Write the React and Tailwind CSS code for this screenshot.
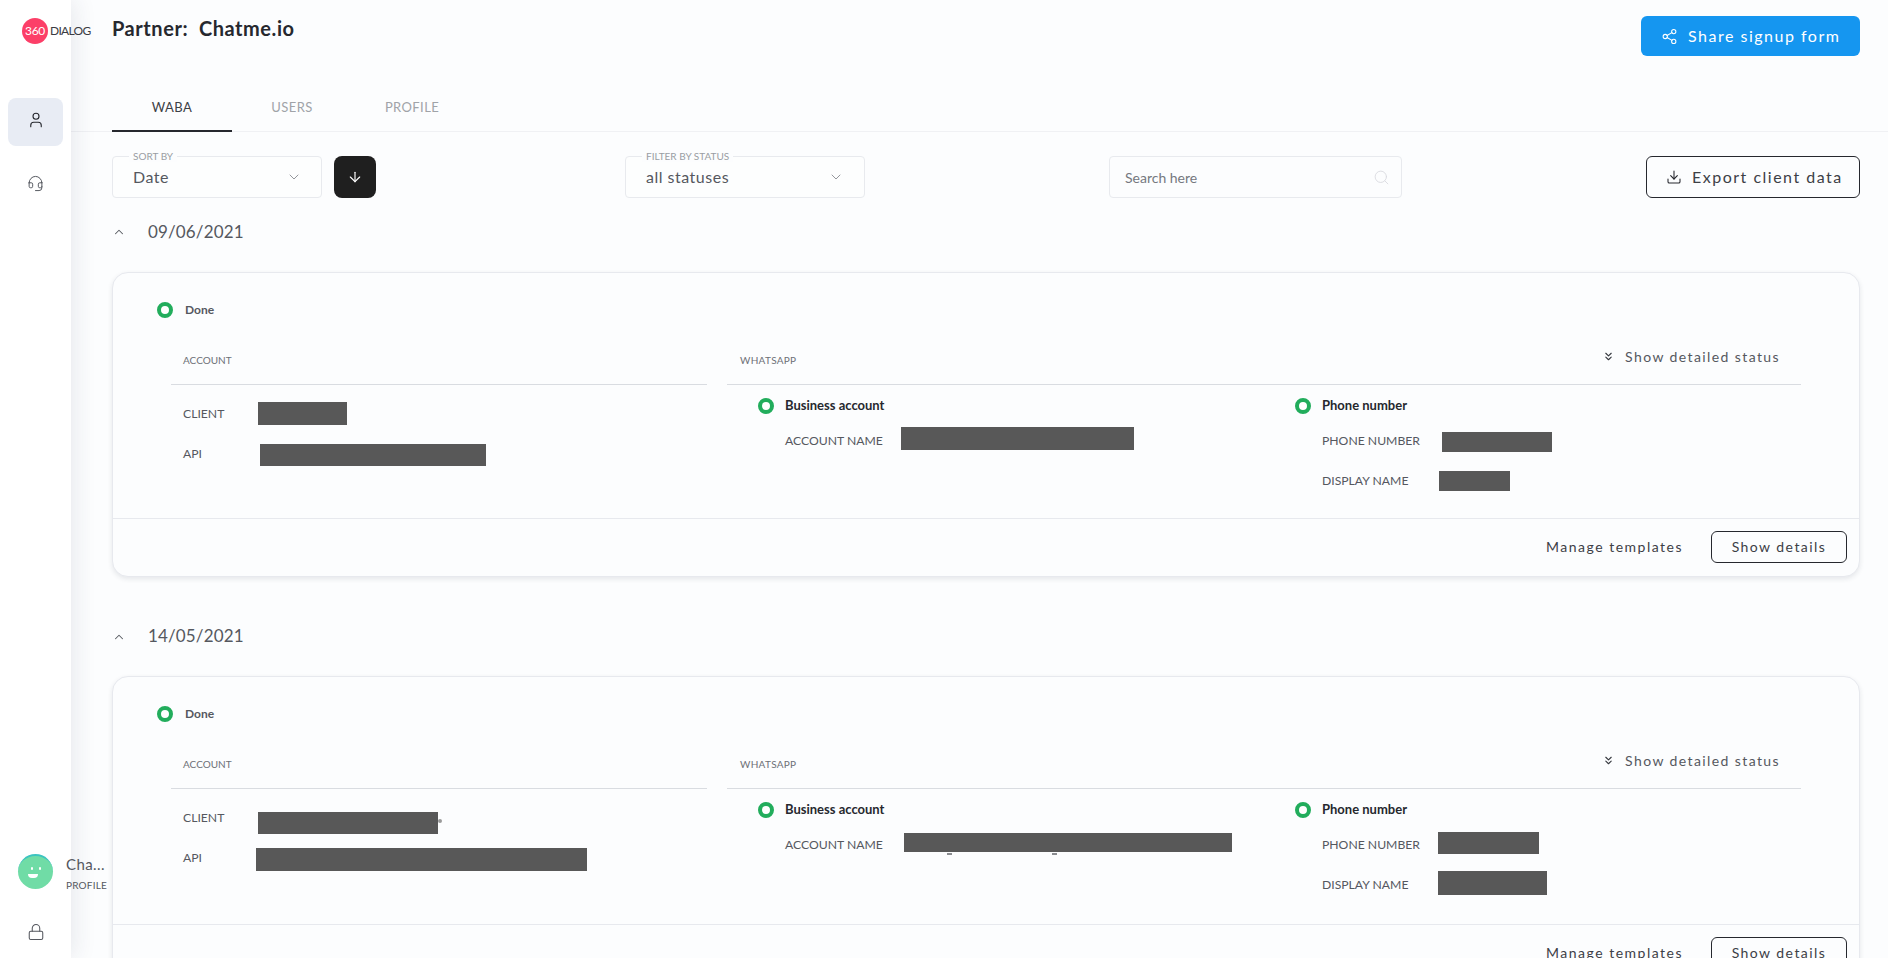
import React from "react";
import { User, Headset, Lock, ChevronDown, ChevronUp, ArrowDown, Share2, Download, Search, ChevronsDown } from "lucide-react";

function Redact({ className = "" }) {
  return <div className={"bg-[#585858] shrink-0 " + className} />;
}
function Dot() {
  return <span className="w-4 h-4 rounded-full border-[4px] border-[#22ad5c] bg-white shrink-0" />;
}
function Field({ label, labelW, children }) {
  return (
    <div className="flex items-center h-10 relative">
      <span className={"text-[12.2px] mt-[1px] text-[#55585f] shrink-0 " + labelW}>{label}</span>
      {children}
    </div>
  );
}
function SelectBox({ label, value, w, chev }) {
  return (
    <div className={"relative h-[42px] border border-[#e8eaee] rounded bg-white/40 flex items-center pl-[20px] " + w}>
      <span className="absolute left-[16px] -top-[7px] px-1 bg-[#fcfdfe] text-[10px] leading-3 text-[#9a9da3] whitespace-nowrap">{label}</span>
      <span className="text-[16px] tracking-[0.5px] text-[#55585f]">{value}</span>
      <ChevronDown className={"absolute top-[12px] text-[#7f8288] " + chev} size={16} strokeWidth={1.25} />
    </div>
  );
}
function Card({ r, bodyH }) {
  return (
    <div className="mt-7 w-[1748px] rounded-2xl border border-[#e7e9ee] shadow-[0_2px_5px_rgba(30,40,60,0.10)] bg-[#fcfdfe]">
      <div className={"pl-[44px] pt-[27px] " + bodyH}>
        <div className="flex items-center h-5">
          <Dot />
          <span className="ml-3 text-[12px] font-bold text-[#55585f]">Done</span>
        </div>
        <div className="flex ml-[14px] mt-5">
          <div className="w-[536px] shrink-0">
            <div className="h-[45px] border-b border-[#d9dce1] flex items-center pl-3 pb-[3px] text-[10px] text-[#6d7076]">ACCOUNT</div>
            <div className="pl-3 pt-[9px]">
              {r.client}
              {r.api}
            </div>
          </div>
          <div className="w-[1074px] ml-[20px] shrink-0">
            <div className="h-[45px] border-b border-[#d9dce1] flex items-center justify-between pl-[13px] pr-[21px] pb-[3px]">
              <span className="text-[10px] tracking-[0.3px] text-[#6d7076]">WHATSAPP</span>
              <span className="flex items-center text-[14px] tracking-[1.4px] text-[#55585f] -mt-[8px]">
                <ChevronsDown size={13} strokeWidth={2} className="mr-[10px] text-[#33363c]" />
                Show detailed status
              </span>
            </div>
            <div className="flex pl-[31px] pt-[11px]">
              <div className="w-[537px] shrink-0">
                <div className="flex items-center h-5">
                  <Dot />
                  <span className="ml-[11px] text-[13px] font-bold text-[#26282e]">Business account</span>
                </div>
                <div className="pl-[27px] pt-[5px]">{r.account}</div>
              </div>
              <div className="shrink-0">
                <div className="flex items-center h-5">
                  <Dot />
                  <span className="ml-[11px] text-[13px] font-bold text-[#26282e]">Phone number</span>
                </div>
                <div className="pl-[27px] pt-[5px]">
                  {r.phone}
                  {r.display}
                </div>
              </div>
            </div>
          </div>
        </div>
      </div>
      <div className="h-[58px] border-t border-[#e7e9ee] flex items-center justify-end pr-3 pb-[2px]">
        <span className="text-[14px] tracking-[1.5px] text-[#3d4046] mr-7">Manage templates</span>
        <button className="w-[136px] h-8 rounded-md border border-[#26282e] text-[14px] tracking-[1.45px] text-[#3d4046]">Show details</button>
      </div>
    </div>
  );
}
function DateRow({ date, first }) {
  return (
    <div className={"flex items-center h-6 " + (first ? "mt-[22px]" : "mt-[47px]")}>
      <ChevronUp size={14} strokeWidth={1.75} className={"text-[#55585f] " + (first ? "" : "mt-[1px]")} />
      <span className={"ml-[22px] text-[17px] tracking-[0.15px] text-[#55585f] " + (first ? "-mt-[1px]" : "mt-0")}>{date}</span>
    </div>
  );
}

const card1 = {
  client: <Field label="CLIENT" labelW="w-[75px]"><Redact className="w-[89px] h-[23px] -mt-[2px]" /></Field>,
  api: <Field label="API" labelW="w-[77px]"><Redact className="w-[226px] h-[22px] mt-[1px]" /></Field>,
  account: <Field label="ACCOUNT NAME" labelW="w-[116px]"><Redact className="w-[233px] h-[23px] -mt-[6px]" /></Field>,
  phone: <Field label="PHONE NUMBER" labelW="w-[120px]"><Redact className="w-[110px] h-5 mt-[2px]" /></Field>,
  display: <Field label="DISPLAY NAME" labelW="w-[117px]"><Redact className="w-[71px] h-5" /></Field>,
};
const card2 = {
  client: (
    <Field label="CLIENT" labelW="w-[75px]">
      <Redact className="w-[180px] h-[22px] mt-[9px]" />
      <span className="w-[4px] h-[4px] rounded-full bg-[#9a9a9a] mt-[6px]" />
    </Field>
  ),
  api: <Field label="API" labelW="w-[73px]"><Redact className="w-[331px] h-[23px] mt-[3px]" /></Field>,
  account: (
    <Field label="ACCOUNT NAME" labelW="w-[119px]">
      <Redact className="w-[328px] h-[19px] -mt-[5px]" />
      <span className="absolute left-[162px] top-[28px] w-[5px] h-[2px] bg-[#8a8c90]" />
      <span className="absolute left-[267px] top-[28px] w-[5px] h-[2px] bg-[#8a8c90]" />
    </Field>
  ),
  phone: <Field label="PHONE NUMBER" labelW="w-[116px]"><Redact className="w-[101px] h-[22px] -mt-[5px]" /></Field>,
  display: <Field label="DISPLAY NAME" labelW="w-[116px]"><Redact className="w-[109px] h-6 -mt-[4px]" /></Field>,
};

export default function App() {
  return (
    <div className="flex h-screen w-full overflow-hidden bg-[#fcfdfe] font-['Lato','Liberation_Sans',sans-serif] text-[#26282e]">
      <aside className="relative z-10 w-[71px] shrink-0 bg-white shadow-[3px_0_22px_rgba(40,50,80,0.10)] flex flex-col items-center">
        <div className="relative w-full h-[98px] shrink-0">
          <div className="absolute left-[22px] top-[18px] w-[26px] h-[26px] rounded-full bg-[#fc3f68] flex items-center justify-center text-white text-[12px] tracking-[-0.3px]">360</div>
          <span className="absolute left-[50px] top-[24px] text-[12px] leading-[14px] tracking-[-0.7px] text-[#3a3c42]">DIALOG</span>
        </div>
        <div className="w-[55px] h-12 shrink-0 rounded-lg bg-[#e8ecf4] flex items-center justify-center">
          <User size={18} strokeWidth={1.5} className="text-[#26282e] -mt-[5px]" />
        </div>
        <div className="mt-[29px] h-4 flex items-center">
          <Headset size={17} strokeWidth={1.4} className="text-[#55585f]" />
        </div>
        <div className="mt-auto w-full relative">
          <div className="flex items-start pl-[18px]">
            <div className="relative w-[35px] h-[35px] rounded-full bg-[#70dca6] overflow-hidden shrink-0 border-t-2 border-[#3cc4c0]">
              <span className="absolute left-[13px] top-[11px] w-[2px] h-[3px] bg-white rounded-full" />
              <span className="absolute left-[21px] top-[11px] w-[2px] h-[3px] bg-white rounded-full" />
              <span className="absolute left-[10px] top-[18px] w-[10px] h-[4px] bg-white rounded-b-full" />
            </div>
            <div className="ml-[13px] shrink-0">
              <div className="text-[15px] leading-[20px] text-[#55585f] tracking-[0.4px]">Cha...</div>
              <div className="text-[10px] leading-[12px] mt-[5px] text-[#55585f] tracking-[0.2px]">PROFILE</div>
            </div>
          </div>
          <div className="flex justify-center mt-[32px] mb-[17px]">
            <Lock size={18} strokeWidth={1.4} className="text-[#55585f]" />
          </div>
        </div>
      </aside>

      <main className="flex-1 min-w-0 overflow-hidden">
        <header className="border-b border-[#f0f1f4] pl-[41px] pr-[28px] h-[132px] flex flex-col">
          <div className="h-[84px] flex justify-between items-start pt-4 shrink-0">
            <h1 className="text-[20px] leading-[26px] font-bold tracking-[0.55px] text-[#26282e] -mt-[1px]">Partner:&nbsp; Chatme.io</h1>
            <button className="w-[219px] h-10 rounded-md bg-[#1596f0] text-white flex items-center pl-[20px] text-[16px] tracking-[1.5px]">
              <Share2 size={17} strokeWidth={1.5} className="mr-[10px]" />
              Share signup form
            </button>
          </div>
          <nav className="flex h-12 text-[13px] tracking-[0.4px]">
            <div className="w-[120px] h-[48px] flex items-center justify-center pt-[2px] border-b-2 border-[#26282e] text-[#3d4046]">WABA</div>
            <div className="w-[120px] flex items-center justify-center text-[#a0a3a8]">USERS</div>
            <div className="w-[120px] flex items-center justify-center text-[#a0a3a8]">PROFILE</div>
          </nav>
        </header>

        <div className="pl-[41px] pr-[28px]">
          <div className="flex items-center mt-6 w-[1748px]">
            <SelectBox label="SORT BY" value="Date" w="w-[210px]" chev="left-[173px]" />
            <button className="ml-3 w-[42px] h-[42px] rounded-lg bg-[#1f1f1f] text-white flex items-center justify-center">
              <ArrowDown size={16} strokeWidth={1.75} />
            </button>
            <div className="ml-[249px]">
              <SelectBox label="FILTER BY STATUS" value="all statuses" w="w-[240px]" chev="left-[202px]" />
            </div>
            <div className="ml-[244px] w-[293px] h-[42px] border border-[#e8eaee] rounded flex items-center pl-[15px] pr-[11px] justify-between">
              <span className="text-[14px] text-[#75787e]">Search here</span>
              <Search size={17} strokeWidth={1.25} className="text-[#d8dadf]" />
            </div>
            <button className="ml-[244px] w-[214px] h-[42px] rounded-md border border-[#26282e] flex items-center pl-[19px] text-[16px] tracking-[1.5px] text-[#3d4046]">
              <Download size={16} strokeWidth={1.6} className="mr-[10px] text-[#26282e]" />
              Export client data
            </button>
          </div>

          <DateRow date="09/06/2021" first />
          <Card r={card1} bodyH="h-[245px]" />
          <DateRow date="14/05/2021" />
          <Card r={card2} bodyH="h-[247px]" />
        </div>
      </main>
    </div>
  );
}
